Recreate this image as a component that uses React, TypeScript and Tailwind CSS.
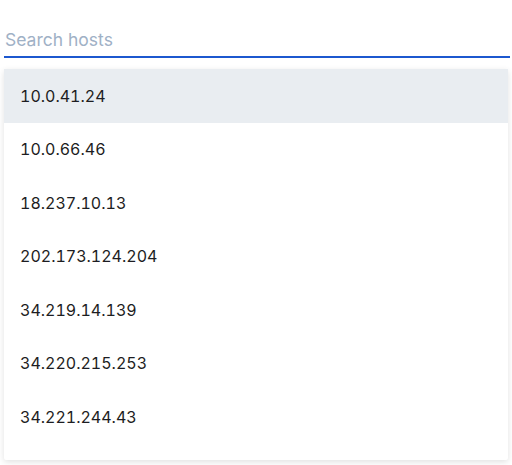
import React from 'react';

const hosts = [
  '10.0.41.24',
  '10.0.66.46',
  '18.237.10.13',
  '202.173.124.204',
  '34.219.14.139',
  '34.220.215.253',
  '34.221.244.43',
];

export default function App() {
  return (
    <div
      className="w-[512px] h-[465px] bg-white overflow-hidden relative"
      style={{ fontFamily: 'Inter, "Noto Sans", sans-serif' }}
    >
      <div className="pt-[23px] pl-1 pr-[2px]">
        <input
          autoFocus
          placeholder="Search hosts"
          className="w-full h-[35px] pl-[1px] text-[17.5px] text-gray-900 caret-black placeholder:text-[#9fb1c6] outline-none border-b-2 border-[#1c58cf] bg-transparent"
        />
      </div>
      <ul className="mt-[11px] ml-1 w-[504px] bg-white shadow-[0_2px_6px_rgba(0,0,0,0.12)] rounded-b-[2px] pb-[16px]">
        {hosts.map((h, i) => (
          <li
            key={h}
            className={`h-[53.5px] flex items-center pl-4 text-[16px] tabular-nums text-[#1d1d22] ${
              i === 0 ? 'bg-[#e9edf1]' : ''
            }`}
          >
            {h}
          </li>
        ))}
      </ul>
    </div>
  );
}
